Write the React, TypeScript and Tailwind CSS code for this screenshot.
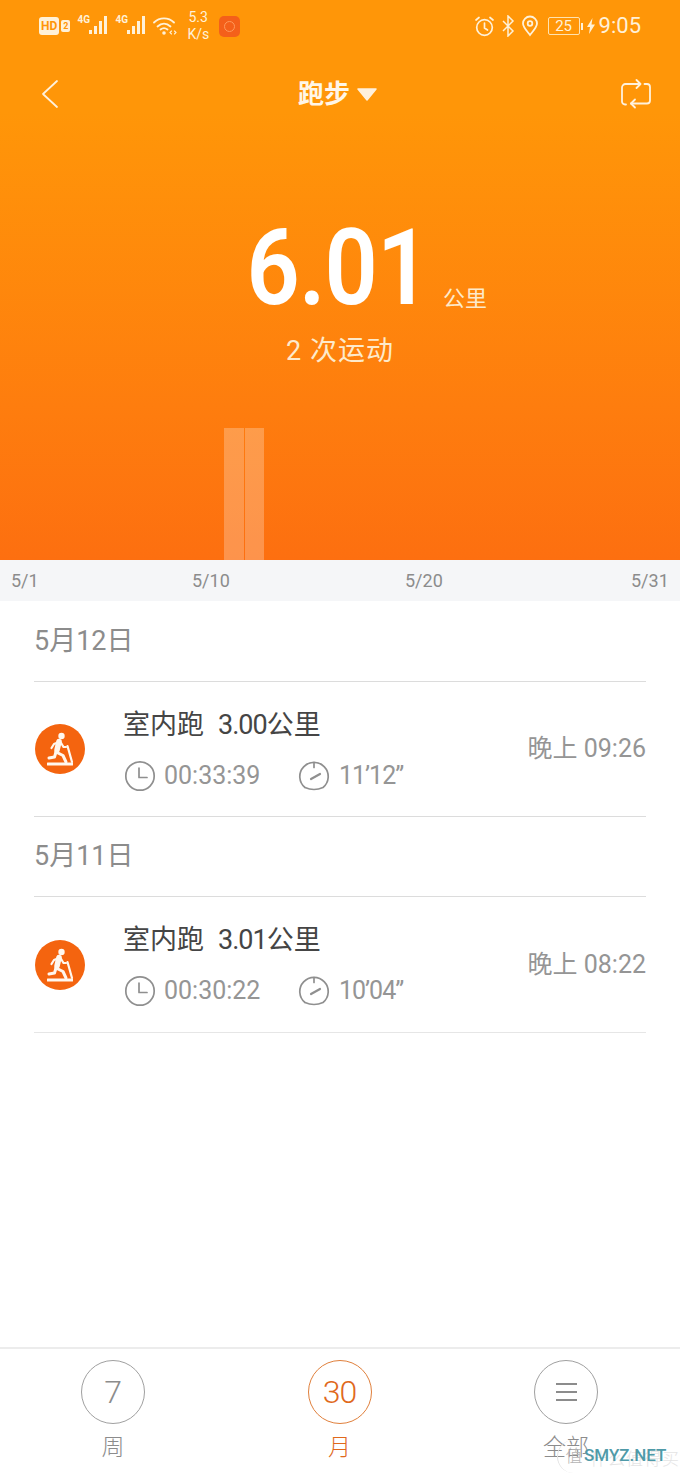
import React from "react";

function SignalIcon() {
  return (
    <div className="flex w-[32px] items-start">
      <span className="-mt-[1px] w-[11px] text-[10px] leading-[10px] font-bold">4G</span>
      <svg width="21" height="20" viewBox="0 0 21 20" fill="#fff1d8">
        <rect x="1" y="14" width="3" height="4" />
        <rect x="6" y="10" width="3" height="8" />
        <rect x="11" y="5" width="3" height="13" />
        <rect x="16" y="0" width="3" height="18" />
      </svg>
    </div>
  );
}

function WifiIcon() {
  return (
    <svg width="24" height="20" viewBox="0 0 24 20" fill="none" stroke="#fff1d8" strokeWidth="1.8" strokeLinecap="round">
      <path d="M1 6.500C6.500 1 15.500 1 21 6.500" />
      <path d="M4.500 10.500C8.500 6.800 13.500 6.800 17.500 10.500" />
      <path d="M7.500 13.500C10 11.500 12 11.500 14.500 13.500" />
      <circle cx="11" cy="17" r="1.800" fill="#fff1d8" stroke="none" />
      <path d="M18.500 15l-1.500 1.500 1.500 1.500M21.500 15l1.500 1.500-1.500 1.500" strokeWidth="1.100" />
    </svg>
  );
}

function RepeatIcon() {
  return (
    <svg width="32" height="30" viewBox="0 0 32 30" fill="none" stroke="#fff1dc" strokeWidth="1.800" strokeLinecap="round" strokeLinejoin="round">
      <path d="M6 25.500H5A3 3 0 0 1 2 22.500V8.500A3.500 3.500 0 0 1 5.500 5H20" />
      <path d="M16.500 1l4 4-4 4" />
      <path d="M24.500 5H27A3 3 0 0 1 30 8v13.500A3 3 0 0 1 27 24.500H11" />
      <path d="M15 20.500l-4 4 4 4" />
    </svg>
  );
}

function RunnerBadge() {
  return (
    <svg width="50" height="50" viewBox="0 0 50 50">
      <circle cx="25" cy="25" r="25" fill="#f4640f" />
      <g fill="#fff7ee">
        <circle cx="26.500" cy="12" r="3.200" />
        <rect x="12" y="38.500" width="26" height="3" rx="0.500" />
      </g>
      <g fill="none" stroke="#fff7ee" strokeLinecap="round" strokeLinejoin="round">
        <path d="M24 17.500L22 26" strokeWidth="5.500" />
        <path d="M21 28L28 31.500L31 38" strokeWidth="3" />
        <path d="M21 28L19.500 33L14 34" strokeWidth="3" />
        <path d="M24 18L19 20L16.500 24" strokeWidth="2.200" />
        <path d="M25.500 18L28.500 23L31 23" strokeWidth="2.200" />
        <path d="M32.500 22L37 38" strokeWidth="2.200" />
      </g>
    </svg>
  );
}

function ClockIcon() {
  return (
    <svg width="32" height="32" viewBox="0 0 32 32" fill="none" stroke="#8f8f8f" strokeWidth="1.700" strokeLinecap="round" strokeLinejoin="round">
      <circle cx="16" cy="16" r="14.200" />
      <path d="M15 8v9.500h8" />
    </svg>
  );
}

function GaugeIcon() {
  return (
    <svg width="32" height="32" viewBox="0 0 32 32" fill="none" stroke="#8f8f8f" strokeWidth="1.700" strokeLinecap="round" strokeLinejoin="round">
      <path d="M7 27.500A14.200 14.200 0 1 1 25 27.500Q16 31.500 7 27.500" />
      <path d="M16 2.500v5" />
      <path d="M13 19l9-5" strokeWidth="2.200" />
    </svg>
  );
}

function Workout({ distance, duration, pace, time }: { distance: string; duration: string; pace: string; time: string }) {
  return (
    <div className="flex h-[135px] items-center border-b border-[#dcdcdc] last:h-[136px] last:border-[#e6e6e6]">
      <div className="ml-px w-[89px] shrink-0">
        <RunnerBadge />
      </div>
      <div className="flex-1">
        <div className="-ml-px text-[27px] leading-[36px] text-[#454545]">
          室内跑
          <span className="ml-[14px] tracking-[-1px]">{distance}</span>
          公里
        </div>
        <div className="mt-[17px] flex h-[32px] items-center text-[25px] text-[#959595]">
          <ClockIcon />
          <span className="ml-[8px] w-[134px]">{duration}</span>
          <GaugeIcon />
          <span className="ml-[9px] tracking-[-1px]">{pace}</span>
        </div>
      </div>
      <div className="text-[25px] text-[#959595]">{time}</div>
    </div>
  );
}

function DateHeading({ children }: { children: React.ReactNode }) {
  return <div className="flex h-[80px] items-center border-b border-[#dcdcdc] text-[27px] text-[#8c8c8c]">{children}</div>;
}

function Tab({ label, active, children }: { label: string; active?: boolean; children: React.ReactNode }) {
  return (
    <div className={"flex w-[64px] flex-col items-center " + (active ? "text-[#e0691c]" : "text-[#8c8c8c]")}>
      <div className={"flex h-[64px] w-[64px] items-center justify-center rounded-full border " + (active ? "border-[#e0803c]" : "border-[#a0a0a0]")}>
        {children}
      </div>
      <div className="mt-[6px] text-[23px] leading-[36px] font-light whitespace-nowrap">{label}</div>
    </div>
  );
}

export default function App() {
  return (
    <div className="relative flex h-[1473px] w-[680px] flex-col overflow-hidden bg-white font-['Roboto','Noto_Sans_CJK_SC',sans-serif]">
      <header className="flex h-[560px] flex-col bg-gradient-to-b from-[#ff9608] from-20% to-[#fd6f10]">
        <div className="flex h-[52px] items-center justify-between pr-[39px] pl-[39px] text-[#fff1d8]">
          <div className="flex items-center">
            <span className="rounded-[3px] bg-[#fff1d8] px-[2px] text-[12px] leading-[18px] font-bold text-[#ff9608]">HD</span>
            <span className="ml-[2px] rounded-[2px] bg-[#fff1d8] px-[2px] text-[9px] leading-[12px] font-bold text-[#ff9608]">2</span>
            <div className="ml-[7px]">
              <SignalIcon />
            </div>
            <div className="ml-[6px]">
              <SignalIcon />
            </div>
            <div className="ml-[6px]">
              <WifiIcon />
            </div>
            <div className="ml-[10px] w-[32px] text-[14px] leading-[17px]">
              <div className="pl-[1px]">5.3</div>
              <div>K/s</div>
            </div>
            <div className="flex h-[21px] w-[21px] items-center justify-center rounded-[5px] bg-[#f4601a]">
              <span className="h-[11px] w-[11px] rounded-full border border-[#ff9a5c]" />
            </div>
          </div>
          <div className="flex items-center">
            <svg width="21" height="21" viewBox="0 0 21 21" fill="none" stroke="#fff1d8" strokeWidth="1.700" strokeLinecap="round">
              <circle cx="10.500" cy="11.500" r="7.800" />
              <path d="M10.500 7v5l3 2M2 4l3-2.500M19 4l-3-2.500" />
            </svg>
            <svg width="16" height="22" viewBox="0 0 16 22" fill="none" stroke="#fff1d8" strokeWidth="1.500" className="ml-[5px]">
              <path d="M3 6l10 10-5 5V1l5 5L3 16" />
            </svg>
            <svg width="18" height="22" viewBox="0 0 18 22" fill="none" stroke="#fff1d8" strokeWidth="1.800" className="ml-[5px]">
              <path d="M9 20C5 15 2 12 2 8.500a7 7 0 0 1 14 0C16 12 13 15 9 20Z" />
              <circle cx="9" cy="8.500" r="2.300" />
            </svg>
            <div className="ml-[9px] flex h-[18px] w-[32px] items-center justify-center rounded-[2px] border border-[#ffe2b0] text-[15px] leading-none">25</div>
            <span className="ml-[1px] h-[7px] w-[2px] bg-[#fff1d8]" />
            <svg width="10" height="16" viewBox="0 0 10 16" fill="#fff1d8" className="ml-[3px]">
              <path d="M6.500 0L1 9h3l-1 7 6-9.500H5.500Z" />
            </svg>
            <span className="ml-[3px] text-[22px] leading-none">9:05</span>
          </div>
        </div>

        <div className="mt-[16px] flex h-[52px] items-center justify-between pr-[28px] pl-[41px]">
          <svg width="18" height="30" viewBox="0 0 18 30" fill="none" stroke="#fff1dc" strokeWidth="1.800" strokeLinecap="round" strokeLinejoin="round">
            <path d="M16 2L2 15l14 13" />
          </svg>
          <div className="mr-[4px] flex items-center text-[26px] font-bold text-[#fff6e8]">
            跑步
            <svg width="20" height="13" viewBox="0 0 20 13" fill="#fff0dc" stroke="#fff0dc" strokeWidth="1.500" strokeLinejoin="round" className="ml-[7px]">
              <path d="M1 1H19L10 12Z" />
            </svg>
          </div>
          <RepeatIcon />
        </div>

        <div className="mt-[82px] flex h-[126px] items-end justify-center pl-[41px]">
          <span className="inline-block scale-x-[.88] text-[106px] leading-[120px] font-semibold tracking-[-1px] text-white">6.01</span>
          <span className="mb-[14px] ml-[1px] text-[22px] leading-[30px] text-[#fdeacb]">公里</span>
        </div>
        <div className="mt-[3px] text-center text-[27px] leading-[40px] tracking-[1px] text-[#fdeacb]">2 次运动</div>

        <div className="mt-auto flex h-[132px] gap-px pl-[224px]">
          <div className="w-[20px] bg-white/25" />
          <div className="w-[19px] bg-white/25" />
        </div>
      </header>

      <div className="flex h-[41px] items-center bg-[#f5f6f8] pl-[11px] text-[18px] text-[#8c8c8c]">
        <span className="w-[181px]">5/1</span>
        <span className="w-[213px]">5/10</span>
        <span className="w-[226px]">5/20</span>
        <span>5/31</span>
      </div>

      <section className="px-[34px] pt-px">
        <DateHeading>5月12日</DateHeading>
        <Workout distance="3.00" duration="00:33:39" pace="11’12”" time="晚上 09:26" />
        <DateHeading>5月11日</DateHeading>
        <Workout distance="3.01" duration="00:30:22" pace="10’04”" time="晚上 08:22" />
      </section>

      <nav className="mt-auto flex h-[126px] justify-between border-t-2 border-[#ececec] pt-[11px] pr-[82px] pl-[81px]">
        <Tab label="周">
          <span className="text-[32px] font-light">7</span>
        </Tab>
        <Tab label="月" active>
          <span className="text-[32px] font-light tracking-[-1px]">30</span>
        </Tab>
        <Tab label="全部">
          <div className="flex w-[21px] flex-col gap-[6px]">
            <span className="h-[2px] bg-[#8c8c8c]" />
            <span className="h-[2px] bg-[#8c8c8c]" />
            <span className="h-[2px] bg-[#8c8c8c]" />
          </div>
        </Tab>
      </nav>

      {/* image watermark over the corner */}
      <div className="absolute top-[1440px] left-[557px] flex h-[33px] w-[33px] items-center justify-center rounded-full border-l border-[#e2e2e2] text-[17px] font-light text-[#b5b5b5]">值</div>
      <div className="absolute top-[1447px] left-[590px] text-[17px] leading-[24px] font-light tracking-[1px] whitespace-nowrap text-[#e4e4e4]">什么值得买</div>
      <div className="absolute top-[1443px] left-[584px] text-[17px] leading-[24px] font-medium text-[#4f9aa8]">SMYZ.NET</div>
    </div>
  );
}
